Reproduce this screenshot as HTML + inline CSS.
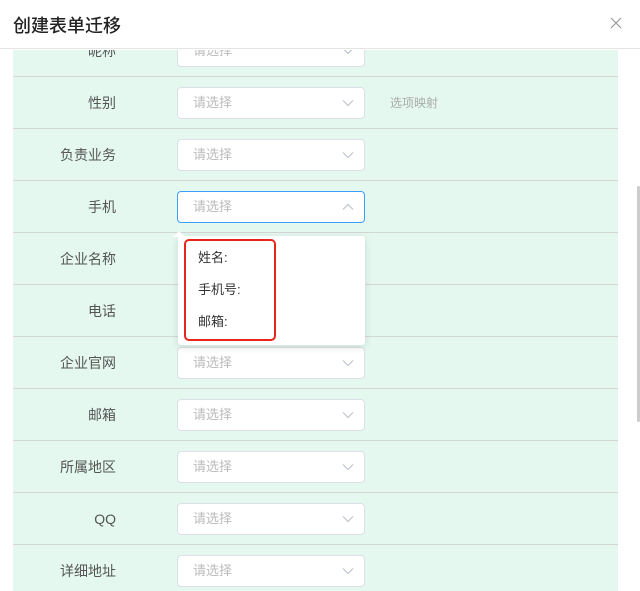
<!DOCTYPE html>
<html><head><meta charset="utf-8"><style>
*{margin:0;padding:0;box-sizing:border-box}
body{width:640px;height:591px;overflow:hidden;background:#fff;font-family:"Liberation Sans","Noto Sans CJK SC",sans-serif;position:relative}
.hdr{position:absolute;left:0;top:0;width:640px;height:49px;background:#fff;border-bottom:1px solid #e4e4e4;z-index:5}
.hdr h1{position:absolute;left:13px;top:14px;font-size:18px;font-weight:500;color:#222;line-height:24px}
.x{position:absolute;left:610px;top:17px}
.green{position:absolute;left:13px;top:50px;width:605px;height:541px;background:#e4f8f0;overflow:hidden}
.row{position:absolute;left:0;width:605px;height:52px;border-bottom:1px solid #d3d6d4}
.lab{position:absolute;right:502px;top:0;line-height:52px;font-size:14px;color:#555;white-space:nowrap}
.sel{position:absolute;left:164px;top:10px;width:188px;height:32px;background:#fff;border:1px solid #dcdfe6;border-radius:4px}
.sel span{position:absolute;left:15px;top:0;line-height:30px;font-size:13px;color:#bbb}
.sel svg{position:absolute;right:10px;top:11px}
.sel.act{border-color:#409eff}
.hint{position:absolute;left:377px;top:0;line-height:52px;font-size:12px;color:#aaa}
.dd{position:absolute;left:178px;top:236px;width:187px;height:109px;background:#fff;border-radius:3px;box-shadow:0 2px 8px rgba(0,0,0,.12);z-index:3}
.arr{position:absolute;left:173px;top:231px;width:0;height:0;border-left:6px solid transparent;border-right:6px solid transparent;border-bottom:6px solid #fff;z-index:4}
.red{position:absolute;left:184px;top:239px;width:92px;height:102px;border:2px solid #e8251a;border-radius:5px;z-index:4}
.it{position:absolute;left:198px;font-size:13px;color:#333;z-index:4;line-height:16px}
.sb{position:absolute;left:637px;top:186px;width:3px;height:236px;background:#ccc;border-radius:2px}
</style></head><body>
<div class="hdr"><h1>创建表单迁移</h1>
<svg class="x" width="12" height="12" viewBox="0 0 12 12"><path d="M1 1L11 11M11 1L1 11" stroke="#999" stroke-width="1.2"/></svg></div>
<div class="green">
<div class="row" style="top:-25px"><div class="lab">昵称</div><div class="sel"><span>请选择</span><svg width="12" height="8" viewBox="0 0 12 8"><path d="M1 1.5L6 6.5L11 1.5" fill="none" stroke="#c0c4cc" stroke-width="1.2"/></svg></div></div>
<div class="row" style="top:27px"><div class="lab">性别</div><div class="sel"><span>请选择</span><svg width="12" height="8" viewBox="0 0 12 8"><path d="M1 1.5L6 6.5L11 1.5" fill="none" stroke="#c0c4cc" stroke-width="1.2"/></svg></div><div class="hint">选项映射</div></div>
<div class="row" style="top:79px"><div class="lab">负责业务</div><div class="sel"><span>请选择</span><svg width="12" height="8" viewBox="0 0 12 8"><path d="M1 1.5L6 6.5L11 1.5" fill="none" stroke="#c0c4cc" stroke-width="1.2"/></svg></div></div>
<div class="row" style="top:131px"><div class="lab">手机</div><div class="sel act"><span>请选择</span><svg width="12" height="8" viewBox="0 0 12 8"><path d="M1 6.5L6 1.5L11 6.5" fill="none" stroke="#c0c4cc" stroke-width="1.2"/></svg></div></div>
<div class="row" style="top:183px"><div class="lab">企业名称</div></div>
<div class="row" style="top:235px"><div class="lab">电话</div></div>
<div class="row" style="top:287px"><div class="lab">企业官网</div><div class="sel"><span>请选择</span><svg width="12" height="8" viewBox="0 0 12 8"><path d="M1 1.5L6 6.5L11 1.5" fill="none" stroke="#c0c4cc" stroke-width="1.2"/></svg></div></div>
<div class="row" style="top:339px"><div class="lab">邮箱</div><div class="sel"><span>请选择</span><svg width="12" height="8" viewBox="0 0 12 8"><path d="M1 1.5L6 6.5L11 1.5" fill="none" stroke="#c0c4cc" stroke-width="1.2"/></svg></div></div>
<div class="row" style="top:391px"><div class="lab">所属地区</div><div class="sel"><span>请选择</span><svg width="12" height="8" viewBox="0 0 12 8"><path d="M1 1.5L6 6.5L11 1.5" fill="none" stroke="#c0c4cc" stroke-width="1.2"/></svg></div></div>
<div class="row" style="top:443px"><div class="lab">QQ</div><div class="sel"><span>请选择</span><svg width="12" height="8" viewBox="0 0 12 8"><path d="M1 1.5L6 6.5L11 1.5" fill="none" stroke="#c0c4cc" stroke-width="1.2"/></svg></div></div>
<div class="row" style="top:495px;border-bottom:none"><div class="lab">详细地址</div><div class="sel"><span>请选择</span><svg width="12" height="8" viewBox="0 0 12 8"><path d="M1 1.5L6 6.5L11 1.5" fill="none" stroke="#c0c4cc" stroke-width="1.2"/></svg></div></div>
</div>
<div class="dd"></div><div class="arr"></div><div class="red"></div>
<div class="it" style="top:250px">姓名:</div>
<div class="it" style="top:282px">手机号:</div>
<div class="it" style="top:314px">邮箱:</div>
<div class="sb"></div>
</body></html>
